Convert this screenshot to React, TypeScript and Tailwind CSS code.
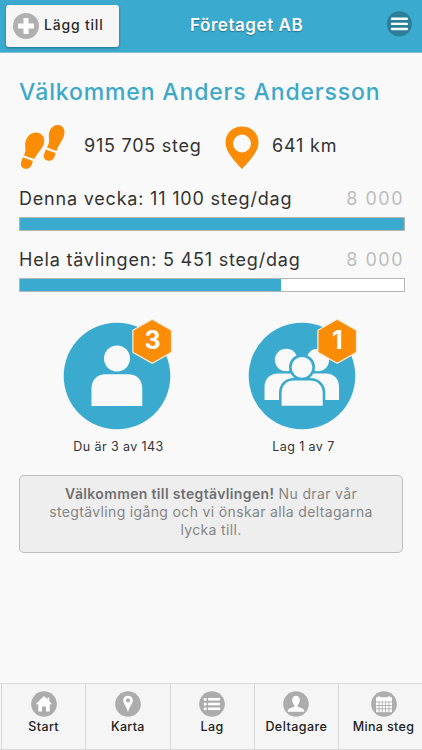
const tabs = [
  { label: "Start", icon: "home", tracking: "tracking-[0.4px]" },
  { label: "Karta", icon: "pin", tracking: "tracking-[0.3px]" },
  { label: "Lag", icon: "list", tracking: "tracking-[0.4px]" },
  { label: "Deltagare", icon: "person", tracking: "tracking-[0.45px]" },
  { label: "Mina steg", icon: "calendar", tracking: "tracking-[0.35px]" },
];

const goals = [
  { label: "Denna vecka: 11 100 steg/dag", goal: "8 000", percent: 100 },
  { label: "Hela tävlingen: 5 451 steg/dag", goal: "8 000", percent: 68 },
];

function TabIcon({ name }: { name: string }) {
  return (
    <svg viewBox="0 0 26 26" className="block size-[26px]" fill="#fff">
      <circle cx="13" cy="13" r="12.8" fill="#acacac" />
      {name === "home" && (
        <path d="M13 5 4.8 13.2H7.3V20.6H11V15.4H15V20.6H18.8V13.2H21.2L18.3 10.2V6.6H16.4V8.4Z" />
      )}
      {name === "pin" && (
        <path
          fillRule="evenodd"
          d="M13 4.8C10.2 4.8 8.2 6.8 8.2 9.5C8.2 12.8 11.4 15 13 21.2C14.6 15 17.8 12.8 17.8 9.5C17.8 6.8 15.8 4.8 13 4.8ZM13 7.3A2.1 2.1 0 1 1 13 11.5A2.1 2.1 0 1 1 13 7.3Z"
        />
      )}
      {name === "list" &&
        [7, 11.7, 16.4].map((y) => (
          <g key={y}>
            <rect x="4.8" y={y} width="2.8" height="2.8" rx="0.8" />
            <rect x="9" y={y} width="12.2" height="2.6" rx="0.8" />
          </g>
        ))}
      {name === "person" && (
        <path d="M13 4.8C10.6 4.8 9.2 6.5 9.2 9C9.2 11.2 10 13 11.3 14.1V15.8C8.2 17 5 17.2 4.6 20.8H21.4C21 17.2 17.8 17 14.7 15.8V14.1C16 13 16.8 11.2 16.8 9C16.8 6.5 15.4 4.8 13 4.8Z" />
      )}
      {name === "calendar" && (
        <>
          <path d="M5 6.3H7V5.2H9V6.3H17V5.2H19V6.3H21V10.4H5Z" />
          <rect x="5" y="11.4" width="16" height="9.8" />
          <path
            d="M5 14.5H21M5 17.8H21M8.1 11.4V21.2M11.3 11.4V21.2M14.6 11.4V21.2M17.9 11.4V21.2"
            stroke="#acacac"
            strokeWidth="0.9"
          />
        </>
      )}
    </svg>
  );
}

function Badge({ value }: { value: string }) {
  return (
    <div className="absolute top-[-4px] left-[69px] h-[46px] w-[41px]">
      <svg viewBox="0 0 41 46" className="absolute inset-0 h-full w-full">
        <path
          d="M20.2 1.2 39.5 12.3V34.3L20.2 45.2 0.9 34.3V12.3Z"
          fill="#fb8c05"
          stroke="#f3ead9"
          strokeWidth="1.3"
        />
      </svg>
      <span className="relative block text-center text-[25px] leading-[45px] font-bold text-white">
        {value}
      </span>
    </div>
  );
}

function Steps() {
  return (
    <svg viewBox="0 0 46 46" className="block h-[46px] w-[46px]" fill="#fb8c05">
      <path d="M4 31.5C5.2 28.5 5.8 26 5.2 22.5C4.6 16 8.5 9 15.5 8.6C21 8.4 24.8 12.5 24.2 18C23.5 24 17.5 28.5 14.3 35Z" />
      <path d="M2.9 33.3 12.8 36.9C12 41.5 10 44.8 6 44.8C1.8 44.7.2 41.5 1.1 38.2Z" />
      <path d="M27 23.5C28.5 20.5 29.6 18 29 14.5C28 7 31.5 1.2 37.5 1C43 .8 45.3 5.5 44.3 10.5C43.2 16 38.8 20 36.5 27Z" />
      <path d="M25.8 25.4 35.6 28.9C34.8 33.5 32.8 36.8 28.8 36.8C24.6 36.7 23.2 33.6 24 30.3Z" />
    </svg>
  );
}

export default function App() {
  return (
    <div className="flex h-[750px] w-[422px] flex-col overflow-hidden bg-[#f9f9f9] font-['Inter',sans-serif] text-[#333]">
      {/* Header */}
      <header className="flex h-[53px] shrink-0 items-start border-b border-[#8dbccb] bg-[#3aabcf] pl-1.5">
        <button className="mt-[5px] flex h-[42px] w-[113px] items-center rounded-[3px] bg-[#f6f6f6] pl-[7px] shadow-[0_1px_3px_rgba(0,0,0,0.35)]">
          <svg viewBox="0 0 26 26" className="size-[26px]">
            <circle cx="13" cy="13" r="13" fill="#b0b0b0" />
            <path d="M13 5V21M5 13H21" stroke="#fff" strokeWidth="5" />
          </svg>
          <span className="-mt-[3px] ml-[5px] text-[14px] leading-5 font-medium tracking-[0.8px] whitespace-nowrap text-[#2b2b2b]">
            Lägg till
          </span>
        </button>
        <h1 className="mt-[13px] ml-[71px] w-[197px] text-[17px] leading-[25px] font-semibold tracking-[0.55px] whitespace-nowrap text-white [text-shadow:0_1px_1px_rgba(0,0,0,0.35)]">
          Företaget AB
        </h1>
        <svg viewBox="0 0 26 26" className="mt-[11px] -ml-px size-[26px]">
          <circle cx="13.3" cy="12.8" r="12.6" fill="#2b7f99" />
          <path
            d="M6 7.8H20.8M6 12.9H20.8M6 18H20.8"
            stroke="#fff"
            strokeWidth="2.4"
            strokeLinecap="round"
          />
        </svg>
      </header>

      <main className="flex-1 pl-5">
        <h2 className="mt-[24px] -ml-px text-[23px] leading-[30px] font-medium tracking-[0.85px] whitespace-nowrap text-[#3ca9c9]">
          Välkommen Anders Andersson
        </h2>

        {/* Totals */}
        <div className="mt-[17px] flex h-[46px] items-start">
          <Steps />
          <span className="mt-[10px] ml-[18px] w-[141px] text-[18px] leading-6 tracking-[0.75px] whitespace-nowrap">
            915 705 steg
          </span>
          <svg viewBox="0 0 34 44" className="mt-[2px] h-[44px] w-[34px]">
            <path
              fillRule="evenodd"
              fill="#fb8c05"
              d="M17 .5C7.5.5.5 7.3.5 16.5C.5 25.5 8.5 34 17 43C25.5 34 33.5 25.5 33.5 16.5C33.5 7.3 26.5.5 17 .5ZM17 8.5A9 9 0 1 1 17 26.5A9 9 0 1 1 17 8.5Z"
            />
          </svg>
          <span className="mt-[10px] ml-[13px] text-[18px] leading-6 tracking-[0.8px] whitespace-nowrap">
            641 km
          </span>
        </div>

        {/* Daily goals */}
        <div className="mt-[17px] -ml-px flex w-[386px] flex-col gap-[17px]">
          {goals.map(({ label, goal, percent }) => (
            <div key={label}>
              <div className="flex h-[30px] justify-between pr-px text-[18px] leading-6 whitespace-nowrap">
                <span className="tracking-[0.8px]">{label}</span>
                <span className="tracking-[1.5px] text-[#bdbdbd]">{goal}</span>
              </div>
              <div className="h-[14px] border border-[#b5b5b5] bg-white">
                <div className="h-full bg-[#3aabcf]" style={{ width: `${percent}%` }} />
              </div>
            </div>
          ))}
        </div>

        {/* Rankings */}
        <div className="mt-[30px] ml-[43px] flex gap-[77px]">
          <div className="relative w-[108px]">
            <svg viewBox="0 0 108 108" className="block size-[108px]" fill="#f9f9f9">
              <circle cx="54" cy="54" r="53.3" fill="#3aabcf" />
              <circle cx="54" cy="36.5" r="13" />
              <path d="M28.5 84V67C28.5 58 34 52.3 43 52.3H65C74 52.3 79.3 58 79.3 67V84Z" />
            </svg>
            <Badge value="3" />
            <p className="mt-[9px] pl-[3px] text-center text-[12.5px] leading-4 tracking-[0.4px] whitespace-nowrap">
              Du är 3 av 143
            </p>
          </div>
          <div className="relative w-[108px]">
            <svg viewBox="0 0 108 108" className="block size-[108px]" fill="#f9f9f9">
              <circle cx="54" cy="54" r="53.3" fill="#3aabcf" />
              <circle cx="38.2" cy="38" r="11.3" />
              <circle cx="69.8" cy="38" r="11.3" />
              <path d="M16.5 78V65C16.5 57 22 51.5 30 51.5H78C86 51.5 91 57 91 65V78Z" />
              <g stroke="#3aabcf" strokeWidth="2.6">
                <circle cx="54" cy="45.3" r="11.7" />
                <path d="M32.3 85V71C32.3 62.5 38 57.3 46 57.3H62C70 57.3 76 62.5 76 71V85Z" />
              </g>
            </svg>
            <Badge value="1" />
            <p className="mt-[9px] pl-[3px] text-center text-[12.5px] leading-4 tracking-[0.4px] whitespace-nowrap">
              Lag 1 av 7
            </p>
          </div>
        </div>

        {/* Message */}
        <div className="mt-[20px] -ml-px h-[78px] w-[384px] rounded-[5px] border border-[#bcbcbc] bg-[#eee] pt-[9px] text-center text-[14px] leading-[18px] tracking-[0.35px] whitespace-nowrap text-[#858585]">
          <p>
            <b className="font-semibold text-[#707070]">Välkommen till stegtävlingen!</b> Nu drar
            vår
          </p>
          <p>stegtävling igång och vi önskar alla deltagarna</p>
          <p>lycka till.</p>
        </div>
      </main>

      {/* Tab bar */}
      <nav className="flex h-[67px] shrink-0 border-y border-[#d9d9d9] bg-[#f5f5f5] pl-px">
        {tabs.map(({ label, icon, tracking }) => (
          <a
            key={label}
            className="flex w-[84.25px] shrink-0 flex-col items-center border-l border-[#d9d9d9] pt-[7px] last:w-[90px]"
          >
            <TabIcon name={icon} />
            <span
              className={`mt-[2px] text-[12.5px] leading-4 font-medium whitespace-nowrap text-[#222] ${tracking}`}
            >
              {label}
            </span>
          </a>
        ))}
      </nav>
    </div>
  );
}
